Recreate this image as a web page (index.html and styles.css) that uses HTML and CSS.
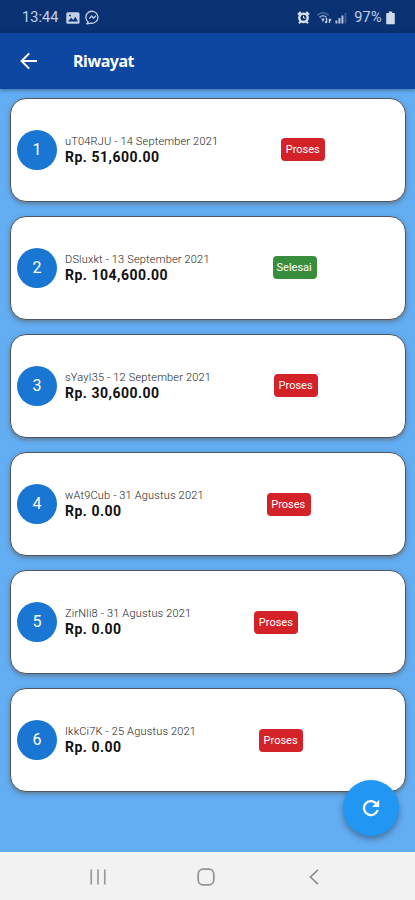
FILE: index.html
```html
<!DOCTYPE html>
<html lang="id">
<head>
    <meta charset="UTF-8">
    <meta name="viewport" content="width=device-width, initial-scale=1.0">
    <title>Riwayat</title>
    <link rel="stylesheet" href="styles.css">
</head>
<body>
    <div class="status-bar">
        <span class="time">13:44</span>
        <svg class="icon-image" width="14" height="12" viewBox="0 0 14 12">
            <rect x="0.3" y="0.3" width="13.2" height="11.4" rx="1.5" fill="#c3cfe6"/>
            <path d="M2 9.5 L5 5.8 L7.2 8 L9.3 4.8 L12 9.5 Z" fill="#0a3272"/>
            <circle cx="4" cy="3.4" r="1" fill="#0a3272"/>
        </svg>
        <svg class="icon-chat" width="15" height="15" viewBox="0 0 15 15" fill="none" stroke="#c3cfe6" stroke-width="1.3" stroke-linejoin="round">
            <path d="M3.2 12 A6 6 0 1 1 6 13.2 L1.8 13.8 Z"/>
            <path d="M4.3 8.7 L6.6 6 L8.5 8.2 L10.9 5.8"/>
        </svg>
        <div class="status-right">
            <svg width="13" height="13" viewBox="0 0 13 13">
                <circle cx="6.5" cy="6.8" r="4.2" fill="none" stroke="#dbe4f3" stroke-width="2.4"/>
                <path d="M6.5 4.8 V7 H8.4" fill="none" stroke="#dbe4f3" stroke-width="1"/>
                <path d="M1 3.6 L3.8 1 M12 3.6 L9.2 1 M2 12.2 L3.5 10.7 M11 12.2 L9.5 10.7" stroke="#dbe4f3" stroke-width="2"/>
            </svg>
            <svg class="icon-wifi" width="17" height="13" viewBox="0 0 17 13" fill="none">
                <path d="M1.3 4.2 Q7 -0.8 12.7 4.2" stroke="#4d6ca5" stroke-width="1.5"/>
                <path d="M3.5 6.4 Q7 3.2 10.5 6.4" stroke="#8fa5cc" stroke-width="1.5"/>
                <path d="M5.3 7.4 H8.5 L7 11.2 Z" fill="#c3cfe6"/>
                <path d="M10.5 7 V12 M9.2 10.5 L10.5 12 M13.5 12 V7.8 M13.5 7.8 L15 9.4" stroke="#c3cfe6" stroke-width="1.4"/>
            </svg>
            <svg class="icon-signal" width="12" height="12" viewBox="0 0 12 12">
                <rect x="0.4" y="8.5" width="2" height="3" fill="#b4c2de"/>
                <rect x="3.4" y="6" width="2" height="5.5" fill="#b4c2de"/>
                <rect x="6.4" y="3.5" width="2" height="8" fill="#b4c2de"/>
                <rect x="9.4" y="0.8" width="2" height="10.7" fill="#38568f"/>
            </svg>
            <span class="percent">97%</span>
            <svg width="9" height="14" viewBox="0 0 9 14">
                <path d="M2.8 0.5 H6.2 V2 H8 Q8.8 2 8.8 2.8 V12.4 Q8.8 13.3 7.9 13.3 H1.1 Q0.2 13.3 0.2 12.4 V2.8 Q0.2 2 1 2 H2.8 Z" fill="#cfd9ec"/>
            </svg>
        </div>
    </div>

    <div class="app-bar">
        <svg width="18" height="18" viewBox="0 0 18 18" fill="none" stroke="#fff" stroke-width="2">
            <path d="M17 9 H2 M9.2 1.4 L1.6 9 L9.2 16.6"/>
        </svg>
        <h1>Riwayat</h1>
    </div>

    <div class="list">
        <div class="card">
            <div class="number">1</div>
            <div class="info">
                <div class="code">uT04RJU - 14 September 2021</div>
                <div class="price">Rp. 51,600.00</div>
            </div>
            <div class="badge">Proses</div>
        </div>
        <div class="card">
            <div class="number">2</div>
            <div class="info">
                <div class="code">DSluxkt - 13 September 2021</div>
                <div class="price">Rp. 104,600.00</div>
            </div>
            <div class="badge done">Selesai</div>
        </div>
        <div class="card">
            <div class="number">3</div>
            <div class="info">
                <div class="code">sYayI35 - 12 September 2021</div>
                <div class="price">Rp. 30,600.00</div>
            </div>
            <div class="badge">Proses</div>
        </div>
        <div class="card">
            <div class="number">4</div>
            <div class="info">
                <div class="code">wAt9Cub - 31 Agustus 2021</div>
                <div class="price">Rp. 0.00</div>
            </div>
            <div class="badge">Proses</div>
        </div>
        <div class="card">
            <div class="number">5</div>
            <div class="info">
                <div class="code">ZirNli8 - 31 Agustus 2021</div>
                <div class="price">Rp. 0.00</div>
            </div>
            <div class="badge">Proses</div>
        </div>
        <div class="card">
            <div class="number">6</div>
            <div class="info">
                <div class="code">IkkCi7K - 25 Agustus 2021</div>
                <div class="price">Rp. 0.00</div>
            </div>
            <div class="badge">Proses</div>
        </div>
    </div>

    <div class="fab">
        <svg width="18" height="18" viewBox="0 0 18 18">
            <path d="M14.2 4.4 A7 7 0 1 0 15.7 11" fill="none" stroke="#fff" stroke-width="2.3"/>
            <path d="M17.2 0.8 V8 H10 Z" fill="#fff"/>
        </svg>
    </div>

    <div class="nav-bar">
        <svg width="16" height="16" viewBox="0 0 16 16" stroke="#9b9b9b" stroke-width="1.7">
            <path d="M1.2 0.5 V15.5 M8 0.5 V15.5 M14.8 0.5 V15.5"/>
        </svg>
        <svg class="home" width="18" height="18" viewBox="0 0 18 18" fill="none" stroke="#939393" stroke-width="1.7">
            <rect x="1.2" y="1.2" width="15.6" height="15.6" rx="4.8"/>
        </svg>
        <svg width="10" height="16" viewBox="0 0 10 16" fill="none" stroke="#8a8a8a" stroke-width="1.6">
            <path d="M9 0.8 L1.5 8 L9 15.2"/>
        </svg>
    </div>
</body>
</html>
```
FILE: styles.css
```css
* {
    margin: 0;
    padding: 0;
    box-sizing: border-box;
}

body {
    display: flex;
    flex-direction: column;
    width: 415px;
    height: 900px;
    background: #63adf2;
    font-family: Roboto, "Liberation Sans", sans-serif;
    position: relative;
    overflow: hidden;
}

.status-bar {
    display: flex;
    align-items: center;
    height: 33px;
    padding: 2px 20px 0 22px;
    background: #0a3272;
    color: #c3cfe6;
    font-size: 14.5px;
}

.time {
    width: 37px;
    letter-spacing: 0.1px;
}

.icon-image {
    margin-left: 7px;
}

.icon-chat {
    margin-left: 5px;
}

.status-right {
    display: flex;
    align-items: center;
    margin-left: auto;
}

.icon-wifi {
    margin-left: 6px;
}

.icon-signal {
    margin-left: 2px;
}

.percent {
    margin: 0 4px 0 7px;
    font-size: 14.5px;
    letter-spacing: 0.3px;
}

.app-bar {
    display: flex;
    align-items: center;
    height: 56px;
    padding-left: 20px;
    background: #0d47a1;
    box-shadow: 0 1px 4px rgba(0, 0, 0, 0.4);
    z-index: 1;
}

.app-bar h1 {
    margin-left: 35px;
    color: #fff;
    font-family: "Noto Sans", sans-serif;
    font-size: 16px;
    font-weight: 700;
    letter-spacing: -0.45px;
}

.list {
    display: flex;
    flex-direction: column;
    flex: 1;
    gap: 14.2px;
    padding: 8.5px 9.5px 0 10px;
}

.card {
    display: flex;
    align-items: center;
    height: 104px;
    padding-left: 6px;
    background: #fff;
    border: 1px solid #4c5661;
    border-radius: 16px;
    box-shadow: 0 2px 4px rgba(90, 90, 90, 0.6);
}

.number {
    width: 40px;
    height: 40px;
    border-radius: 50%;
    background: #1976d2;
    color: #fff;
    font-size: 16px;
    line-height: 40px;
    text-align: center;
}

.info {
    margin: 0 63px 0 8px;
    white-space: nowrap;
}

.code {
    color: #222;
    font-size: 11px;
    font-weight: 300;
    letter-spacing: 0.18px;
    line-height: 15px;
}

.price {
    color: #111;
    font-size: 14px;
    font-weight: 700;
    letter-spacing: 0.5px;
    line-height: 17px;
}

.badge {
    width: 44px;
    height: 23px;
    padding-right: 1px;
    border-radius: 4px;
    background: #d32329;
    color: #fff;
    font-size: 11px;
    line-height: 23px;
    text-align: center;
}

.done {
    background: #388e3c;
}

/* floats over the last card */
.fab {
    position: absolute;
    right: 16px;
    bottom: 64px;
    display: flex;
    justify-content: center;
    align-items: center;
    width: 56px;
    height: 56px;
    border-radius: 50%;
    background: #2196f3;
    box-shadow: 0 3px 6px rgba(0, 0, 0, 0.35);
}

.nav-bar {
    display: flex;
    align-items: center;
    justify-content: space-between;
    height: 48px;
    padding: 2px 96px 0 90px;
    background: #f2f2f2;
}

.home {
    margin-right: 4px;
}
```
